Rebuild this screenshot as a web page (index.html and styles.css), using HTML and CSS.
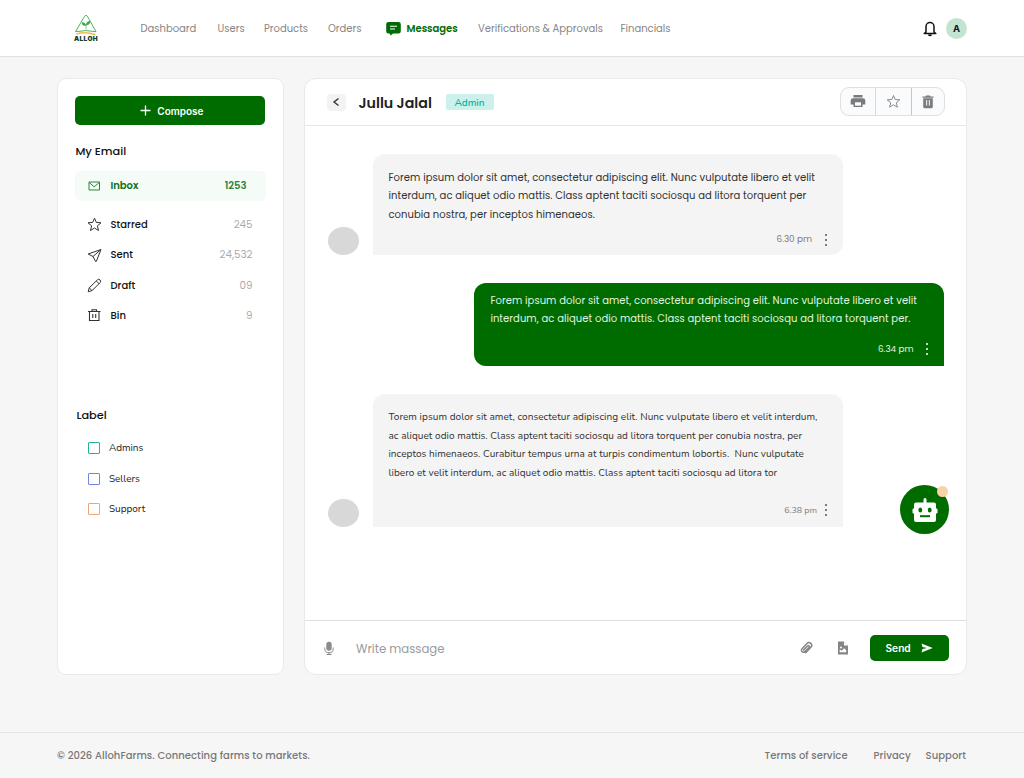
FILE: index.html
```
<!DOCTYPE html>
<html lang="en">
<head>
  <meta charset="UTF-8">
  <title>AllohFarms - Messages</title>
  <link rel="stylesheet" href="styles.css">
</head>
<body>
  <header class="topbar">
    <div class="logo">
      <svg width="26" height="21" viewBox="0 0 26 21" fill="none">
        <path d="M2.500 16.700 11.600 1.200Q13 -.6 14.400 1.200L23 16.700Q13 14.500 2.500 16.700Z" stroke="#4fb35c" stroke-width="1"/>
        <path d="M13 14.500V9.500M12.800 10.500Q9 11 9 7.500Q12.500 7.500 12.800 10.500ZM13.200 10Q13.300 6.500 17 6.200Q17 10 13.200 10Z" fill="#3da551" stroke="#3da551" stroke-width=".6"/>
        <path d="M3.500 19Q13 16.200 22.500 19.800" stroke="#efbd4b" stroke-width="1.500"/>
      </svg>
      <span>ALLOH</span>
    </div>
    <nav class="nav">
      <a class="n-dashboard">Dashboard</a>
      <a class="n-users">Users</a>
      <a class="n-products">Products</a>
      <a class="n-orders">Orders</a>
      <a class="active">
        <svg width="15" height="14" viewBox="0 0 15 14">
          <path d="M2.500 0h10A2.300 2.300 0 0 1 14.800 2.300v7A2.300 2.300 0 0 1 12.500 11.600H7L4.700 13.500 3.600 11.600H2.500A2.300 2.300 0 0 1 .2 9.300v-7A2.300 2.300 0 0 1 2.500 0Z" fill="#006c00"/>
          <path d="M4 4.300h7M4 7h5" stroke="#fff" stroke-width="1.100"/>
        </svg>
        <span>Messages</span>
      </a>
      <a class="n-verify">Verifications &amp; Approvals</a>
      <a class="n-finance">Financials</a>
    </nav>
    <div class="account">
      <svg width="14" height="16" viewBox="0 0 14 16" fill="none" stroke="#111" stroke-width="1.500" stroke-linejoin="round">
        <path d="M3 11V5.500a4 4 0 0 1 8 0V11l1.800 1.600H1.200Z"/>
        <path d="M5.500 13.500q1.500 2 3 0"/>
      </svg>
      <div class="user">A</div>
    </div>
  </header>

  <main class="page">
    <aside class="sidebar">
      <button class="compose" type="button">
        <svg width="11" height="11" viewBox="0 0 11 11"><path d="M5.500 .5v10M.5 5.500h10" stroke="#fff" stroke-width="1.300"/></svg>
        <span>Compose</span>
      </button>
      <h2>My Email</h2>
      <ul class="folders">
        <li class="current">
          <svg width="15" height="14" viewBox="0 0 15 14" fill="none" stroke="#2e8540" stroke-width="1"><path d="M2 3h10.500v8H2ZM2 3.300l5.200 4.500 5.300-4.500"/></svg>
          <span class="name">Inbox</span><span class="count">1253</span>
        </li>
        <li>
          <svg width="15" height="15" viewBox="0 0 15 15" fill="none" stroke="#333" stroke-width="1" stroke-linejoin="round"><path d="M7.500 1.200 9.300 5.400 14 5.800 10.400 8.800 11.500 13.500 7.500 11 3.500 13.500 4.600 8.800 1 5.800 5.700 5.400Z"/></svg>
          <span class="name">Starred</span><span class="count">245</span>
        </li>
        <li>
          <svg width="15" height="15" viewBox="0 0 15 15" fill="none" stroke="#333" stroke-width="1" stroke-linejoin="round"><path d="M14 1.500 1.200 6 6 8.500 8.600 13.500Q9 14 9.300 13.400ZM14 1.500 6 8.500"/></svg>
          <span class="name">Sent</span><span class="count">24,532</span>
        </li>
        <li>
          <svg width="15" height="15" viewBox="0 0 15 15" fill="none" stroke="#333" stroke-width="1" stroke-linejoin="round"><path d="M1.200 13.800 2.200 9.800 10.500 1.800Q11.700 .7 13 1.900T13.300 4.500L5 12.600ZM9.300 3 12 5.700M2.200 9.800 5 12.600"/></svg>
          <span class="name">Draft</span><span class="count">09</span>
        </li>
        <li>
          <svg width="15" height="14" viewBox="0 0 15 14" fill="none" stroke="#333" stroke-width="1.100"><path d="M1 2.500h12.500M5 2.500V.7h4.500v1.800M2.500 2.500v9H12v-9M5.800 5v4M8.700 5v4"/></svg>
          <span class="name">Bin</span><span class="count">9</span>
        </li>
      </ul>
      <h2 class="label-title">Label</h2>
      <ul class="labels">
        <li><i class="box green"></i>Admins</li>
        <li><i class="box blue"></i>Sellers</li>
        <li><i class="box orange"></i>Support</li>
      </ul>
    </aside>

    <section class="chat">
      <div class="chat-head">
        <button class="back" type="button">
          <svg width="8" height="10" viewBox="0 0 8 10" fill="none" stroke="#333" stroke-width="1.400"><path d="M6.500 1.500 2 5l4.500 3.500"/></svg>
        </button>
        <h1>Jullu Jalal</h1>
        <span class="tag">Admin</span>
        <div class="tools">
          <span>
            <svg width="16" height="13" viewBox="0 0 16 13" fill="#7a7b7d"><path d="M3.500 0h9v2.500h-9ZM3 3.300h10a2.300 2.300 0 0 1 2.300 2.300v4h-2.800V12h-9V9.600H.7v-4A2.300 2.300 0 0 1 3 3.300Z"/><path d="M5 7.300h6v3.400H5Z" fill="#fafbfd"/></svg>
          </span>
          <span>
            <svg width="15" height="15" viewBox="0 0 15 15" fill="none" stroke="#8b8b8b" stroke-width="1"><path d="M7.500 1.500 9.200 5.500 13.800 5.800 10.300 8.700 11.400 13.200 7.500 10.800 3.600 13.200 4.700 8.700 1.200 5.800 5.800 5.500Z"/></svg>
          </span>
          <span>
            <svg width="12" height="14" viewBox="0 0 12 14" fill="#7c7c7c"><path d="M.5 1.500H3.500L4 .5h4l.5 1h3v1.300H.5ZM1.200 3.300h9.600v8.400a1.500 1.500 0 0 1-1.500 1.500H2.700a1.500 1.500 0 0 1-1.500-1.500Z"/><path d="M4.600 5v5.500M7.400 5v5.500" stroke="#eee" stroke-width="1.100"/></svg>
          </span>
        </div>
      </div>

      <div class="messages">
        <div class="row">
          <div class="avatar"></div>
          <div class="bubble first">
            <p>Forem ipsum dolor sit amet, consectetur adipiscing elit. Nunc vulputate libero et velit<br>interdum, ac aliquet odio mattis. Class aptent taciti sociosqu ad litora torquent per<br>conubia nostra, per inceptos himenaeos.</p>
            <div class="meta">6.30 pm <span class="dots"><i></i><i></i><i></i></span></div>
          </div>
        </div>
        <div class="row mine">
          <div class="bubble reply">
            <p>Forem ipsum dolor sit amet, consectetur adipiscing elit. Nunc vulputate libero et velit<br>interdum, ac aliquet odio mattis. Class aptent taciti sociosqu ad litora torquent per.</p>
            <div class="meta">6.34 pm <span class="dots"><i></i><i></i><i></i></span></div>
          </div>
        </div>
        <div class="row">
          <div class="avatar"></div>
          <div class="bubble last">
            <p>Torem ipsum dolor sit amet, consectetur adipiscing elit. Nunc vulputate libero et velit interdum,<br>ac aliquet odio mattis. Class aptent taciti sociosqu ad litora torquent per conubia nostra, per<br>inceptos himenaeos. Curabitur tempus urna at turpis condimentum lobortis.&nbsp; Nunc vulputate<br>libero et velit interdum, ac aliquet odio mattis. Class aptent taciti sociosqu ad litora tor</p>
            <div class="meta">6.38 pm <span class="dots"><i></i><i></i><i></i></span></div>
          </div>
        </div>
        <!-- floating assistant -->
        <div class="bot">
          <svg width="26" height="26" viewBox="0 0 26 26">
            <path d="M11.500 2.500a1.500 1.500 0 1 1 3 0V5.500H22A2 2 0 0 1 24 7.500V11.500H24.500A1 1 0 0 1 25.500 12.500V15.500A1 1 0 0 1 24.500 16.500H24V23A2 2 0 0 1 22 25H4A2 2 0 0 1 2 23V16.500H1.500A1 1 0 0 1 .5 15.500V12.500A1 1 0 0 1 1.500 11.500H2V7.500A2 2 0 0 1 4 5.500H11.500Z" fill="#fff"/>
            <ellipse cx="8.300" cy="13" rx="1.900" ry="2.600" fill="#006c00"/>
            <ellipse cx="17.700" cy="13" rx="1.900" ry="2.600" fill="#006c00"/>
            <path d="M8 19.200h10" stroke="#006c00" stroke-width="2"/>
          </svg>
          <i class="badge"></i>
        </div>
      </div>

      <div class="composer">
        <svg class="mic" width="10" height="15" viewBox="0 0 10 15" fill="none"><rect x="2.300" y=".8" width="5.400" height="9" rx="2.700" fill="#8b8b8b"/><path d="M.8 6.500v1.300a4.200 4 0 0 0 8.400 0V6.500M5 11.500v2M2.500 13.500h5" stroke="#8b8b8b" stroke-width="1"/></svg>
        <span class="placeholder">Write massage</span>
        <svg class="clip" width="14" height="14" viewBox="0 0 14 14" fill="none" stroke="#858585" stroke-width="1.500" stroke-linecap="round"><path d="M4.700 8.900 8.600 5a1 1 0 0 1 1.500 1.500L6 10.600a2 2 0 0 1-3-2.900L8 2.500a2.600 2.600 0 0 1 3.900 3.700L6.700 11.800"/></svg>
        <svg class="file" width="12" height="14" viewBox="0 0 12 14"><path d="M1 .5h6L11 4.500v9H1Z" fill="#858585"/><path d="M7 .5V4.500h4M2.700 11.200V8.500l2 1.200 2.500-2.500 2 2v2Z" fill="#fff"/><circle cx="4" cy="6.500" r="1" fill="#fff"/></svg>
        <button class="send" type="button">
          <span>Send</span>
          <svg width="12" height="10" viewBox="0 0 12 10" fill="#fff"><path d="M.5 .5 11.700 5 .5 9.500 1.500 6 6 5 1.500 4Z"/></svg>
        </button>
      </div>
    </section>
  </main>

  <footer class="footer">
    <span class="copy">© 2026 AllohFarms. Connecting farms to markets.</span>
    <div class="links">
      <a class="terms">Terms of service</a>
      <a class="privacy">Privacy</a>
      <a class="support">Support</a>
    </div>
  </footer>
</body>
</html>
```

FILE: styles.css
```
* { box-sizing: border-box; }
body {
  margin: 0; height: 778px; display: flex; flex-direction: column; overflow: hidden;
  background: #f6f6f6; color: #111; font-family: Poppins, Inter, sans-serif; font-size: 10px;
}
svg { display: block; flex-shrink: 0; }
h1, h2, p, ul { margin: 0; padding: 0; }
ul { list-style: none; }
button { border: none; padding: 0; font-family: inherit; color: inherit; }

/* header */
.topbar {
  height: 57px; flex-shrink: 0; display: flex; align-items: center;
  padding: 1px 57px 0 73px; background: #fff; border-bottom: 1px solid #e1e1e1;
}
.logo { width: 26px; margin-right: 41.500px; display: flex; flex-direction: column; align-items: center; }
.logo span { font-family: Inter, sans-serif; font-size: 6.500px; line-height: 7px; font-weight: 900; letter-spacing: 0.4px; color: #173a17; }
.nav { display: flex; align-items: center; color: #858585; white-space: nowrap; }
.nav a { display: block; }
.nav .n-dashboard { width: 77px; }
.nav .n-users { width: 46.500px; }
.nav .n-products { width: 64px; }
.nav .n-orders { width: 57.500px; }
.nav .active { width: 92.500px; display: flex; align-items: center; gap: 6px; color: #006c00; font-weight: 600; }
.nav .n-verify { width: 142.500px; }
.account { margin-left: auto; display: flex; align-items: center; gap: 9px; }
.user {
  width: 21px; height: 21px; border-radius: 50%; background: #c3e4d0;
  display: flex; align-items: center; justify-content: center; font-family: Inter, sans-serif; font-weight: 700; font-size: 9.500px;
}

/* layout */
.page { height: 675px; flex-shrink: 0; display: flex; gap: 21px; padding: 21px 57px 57px; }
.sidebar, .chat { background: #fff; border: 1px solid #e9e9e9; border-radius: 9px; }

/* sidebar */
.sidebar { width: 226.500px; padding: 17px 17px 0 17.400px; }
.compose {
  width: 190px; height: 29px; padding-left: 3px; display: flex; align-items: center; justify-content: center; gap: 6px;
  background: #006c00; border-radius: 5px; color: #fff; font-family: Inter, sans-serif; font-size: 10px; font-weight: 600;
}
.sidebar h2 { margin-top: 17.500px; font-size: 11.300px; line-height: 16px; font-weight: 500; }
.folders { margin-top: 12px; }
.folders li { height: 30.500px; display: flex; align-items: center; padding: 0 13px 0 12px; }
.folders .name { margin-left: 8px; font-weight: 500; letter-spacing: 0.05px; }
.folders .count { margin-left: auto; font-size: 10.300px; color: #ababab; }
.folders .current { height: 30px; margin-bottom: 9px; padding-right: 19px; background: #f5fbf6; border-radius: 6px; color: #0b6f17; }
.folders .current .name { font-weight: 600; letter-spacing: 0; }
.folders .current .count { font-size: 10px; font-weight: 600; color: #2d8540; }
.sidebar .label-title { margin-top: 75px; padding-left: 1px; }
.labels { margin-top: 10.500px; font-family: Nunito, "Open Sans", sans-serif; }
.labels li { height: 30.500px; display: flex; align-items: center; gap: 9px; padding-left: 12.500px; color: #222; }
.box { width: 12px; height: 12px; border: 1px solid; border-radius: 1px; }
.box.green { border-color: #27b195; }
.box.blue { border-color: #7185e2; }
.box.orange { border-color: #f1a477; }

/* chat */
.chat { flex: 1; margin-left: -0.500px; display: flex; flex-direction: column; border-radius: 12px; }
.chat-head { height: 47px; display: flex; align-items: center; padding: 0 21px 0 21.500px; border-bottom: 1px solid #e6e6e6; }
.back { width: 19px; height: 17px; background: #f3f3f3; border-radius: 4px; display: flex; align-items: center; justify-content: center; }
.chat-head h1 { width: 87px; margin: 2px 0 0 13px; font-size: 14.200px; font-weight: 600; white-space: nowrap; color: #202224; }
.tag {
  width: 48px; height: 16px; padding-top: 1px; display: flex; align-items: center; justify-content: center;
  background: #ccf0eb; color: #00b69b; border-radius: 2px; font-family: Nunito, "Open Sans", sans-serif; font-size: 10px; font-weight: 600;
}
.tools { width: 105px; height: 29px; margin: -1px 0 0 auto; display: flex; border: 1px solid #dfdfdf; border-radius: 9px; background: #fafbfd; }
.tools span { width: 36px; display: flex; align-items: center; justify-content: center; }
.tools span:first-child { width: 34px; }
.tools span + span { border-left: 1px solid #d9d9d9; }
.tools span:last-child { width: 33px; border-left-color: #c6c6c6; }

.messages { position: relative; flex: 1; padding: 28px 22px 0 22.500px; display: flex; flex-direction: column; }
.row { display: flex; align-items: flex-end; gap: 14px; margin-bottom: 28px; }
.mine { justify-content: flex-end; }
.avatar { width: 31px; height: 28px; border-radius: 50%; background: #d8d8d8; }
.bubble {
  width: 470px; padding: 14.500px 16px 0; background: #f4f4f4; color: #313131;
  border-radius: 12px 12px 12px 0; display: flex; flex-direction: column; white-space: nowrap;
}
.bubble p { line-height: 18.500px; letter-spacing: 0.055px; }
.first { height: 101px; }
.reply { height: 83px; padding: 8.800px 16px 0 16.400px; background: #006c00; color: #e3f3e3; border-radius: 12px 12px 0 12px; }
.last { height: 133px; padding-top: 14.200px; border-radius: 12px 12px 0 0; font-family: Nunito, "Open Sans", sans-serif; }
.meta { margin-top: auto; height: 33px; display: flex; align-items: center; justify-content: flex-end; gap: 12.500px; font-size: 8.800px; color: #7b7b7b; }
.reply .meta { height: 34px; color: #e3f3e3; }
.last .meta { height: 34px; gap: 7.500px; }
.dots { display: flex; flex-direction: column; gap: 3px; }
.dots i { width: 2px; height: 2px; border-radius: 50%; background: #555; }
.reply .dots i { background: #fff; }

.bot {
  position: absolute; right: 17px; bottom: 86px; width: 49px; height: 49px; border-radius: 50%;
  background: #006c00; display: flex; align-items: center; justify-content: center;
}
.badge { position: absolute; top: 1px; right: 1px; width: 11px; height: 11px; border-radius: 50%; background: #f8d2a8; }

.composer { height: 54px; display: flex; align-items: center; padding: 0 17.400px 0 19px; border-top: 1px solid #dedede; }
.mic { margin-top: 1px; }
.placeholder { margin: 3px 0 0 22px; font-size: 11.700px; color: #9a9a9a; }
.clip { margin-left: auto; }
.file { margin: 0 21px 0 24px; }
.send {
  width: 79px; height: 26px; border-radius: 5px; background: #006c00; color: #fff;
  display: flex; align-items: center; justify-content: center; gap: 10px; font-family: Inter, sans-serif; font-size: 10.200px; font-weight: 600;
}

/* footer */
.footer {
  flex: 1; border-top: 1px solid #e4e4e4; padding: 0 58px 0 57px;
  display: flex; align-items: center; justify-content: space-between; color: #777; font-weight: 500;
}
.copy { letter-spacing: 0.07px; }
.links { display: flex; letter-spacing: 0.05px; }
.terms { width: 109px; }
.privacy { width: 52px; }
```
